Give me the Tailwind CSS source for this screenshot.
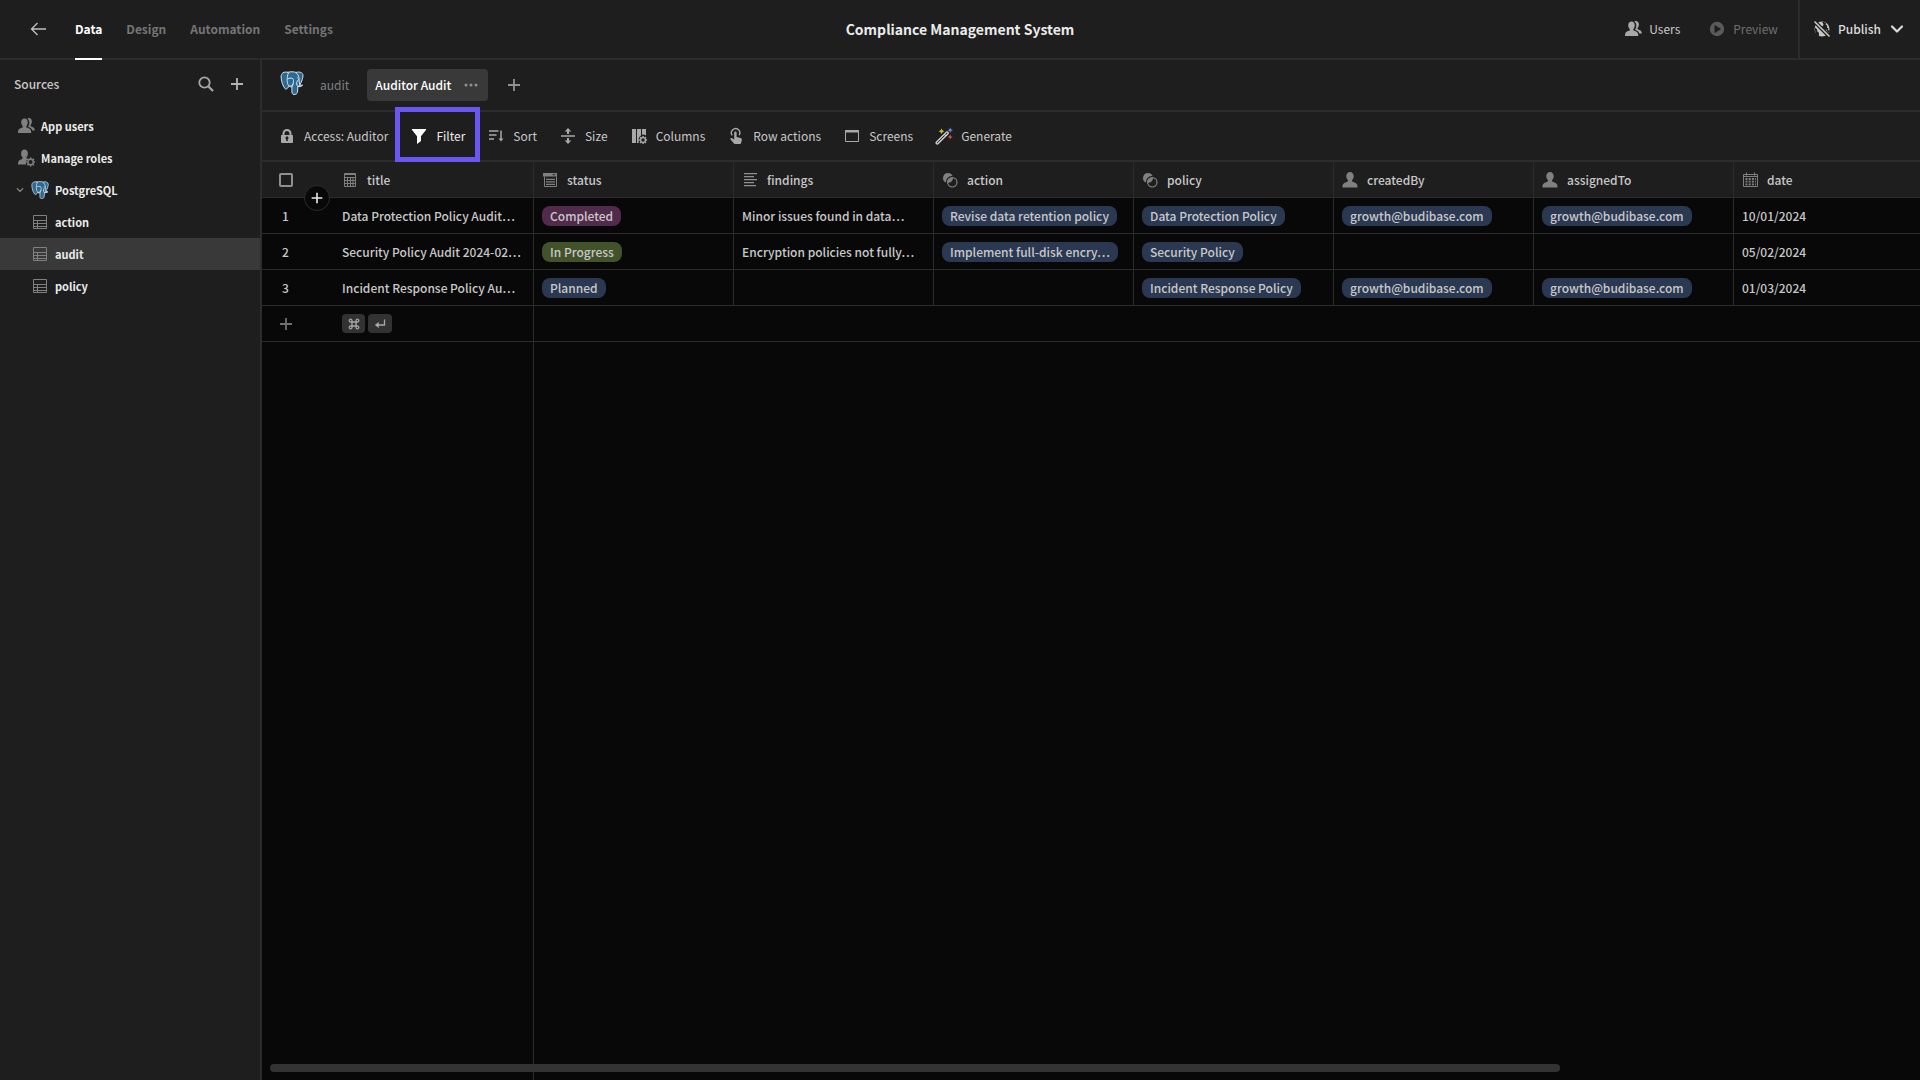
<!DOCTYPE html>
<html lang="en">
  <head>
    <meta charset="UTF-8" />
    <meta name="viewport" content="width=device-width, initial-scale=1.0" />
    <title>Compliance Management System</title>
    <script src="https://cdn.jsdelivr.net/npm/@tailwindcss/browser@4"></script>
  </head>
  <body
    class="flex h-screen flex-col overflow-hidden bg-[#1e1e1e] font-['Noto_Sans_CJK_SC','Open_Sans',sans-serif] text-[12px] leading-5 text-[#c8c8c8]"
  >
    <!-- icon set -->
    <svg class="hidden">
      <symbol id="postgres" viewBox="0 0 24 24">
        <g stroke="#d5dfe6" stroke-width="1" stroke-linejoin="round" stroke-linecap="round">
          <path fill="#2c6a94" d="M7.6 1.3C3.6.2 1 2.2 1.1 6c.1 3.600 1.700 9 3.700 11.400.9 1.100 2 .7 3-.5l1.300-1.600c.8.500 1.700.600 2.800.500v5c.1 2.600 1.600 3 3.300 2.600 1.800-.4 2.300-1.400 2.400-3.400l.3-4.400c1.600.2 3.600-.1 4.700-1.400-.9.1-2.300.1-2.800-.5 2-2.900 3.300-7.200 3.200-9.500C22.900 1.800 19.700.2 15.900 1.500 14.300.7 10.300.4 7.600 1.300Z" />
          <path fill="none" d="M8.800 1.600C7 3.500 7.300 7 7.200 9.200c-.1 2 .4 4.700 1.900 6.100M15.900 1.500c2.200 1.500 3.100 4 3.100 6.500 0 2.400.3 3.700.8 5.700M12.300 7.400c1.600-.6 1.300 3.800.8 5.600-.5 1.500-2.300 1.800-4 2.300M11.900 15.800c.3-1.300 1.200-1.700 1.200-2.800M17.900 15.600c-.5-.8-1.100-1.500-1.300-2.700M16.600 12.900c-.2-2.500 1.300-4 2.300-4.700M8 7.800c1.500-.9 3.200-.9 4.300-.4" />
          <path fill="#d5dfe6" stroke="none" d="M10 6.700h1.500l-.6.900ZM16.600 6.500h1.500l-.8.900ZM18.600 13.900c1.400.6 3 .5 4.100.4-.9 1.100-2.800 1.600-4.500 1.200Z" />
        </g>
      </symbol>
      <symbol id="users" viewBox="0 0 18 18">
        <path d="M7.500 1.500c2 0 3.300 1.500 3.300 3.800 0 1.500-.6 2.900-1.400 3.700-.3.900 0 1.400.8 1.700 2.100.7 4 1.500 4 4.200V16H1v-1.100c0-2.700 1.800-3.500 4-4.200.8-.3 1-.8.700-1.700-.9-.8-1.500-2.200-1.500-3.700 0-2.300 1.400-3.800 3.300-3.800Z" />
        <path d="M10.300 1.500c.5-.4 1-.5 1.600-.5 1.800 0 3 1.400 3 3.500 0 1.500-.5 2.700-1.300 3.500-.3.900 0 1.300.7 1.600 1.900.6 3.600 1.500 3.600 4h-2.600c-.4-2.100-1.800-3.100-4.300-3.900.9-1.200 1.300-2.800 1.300-4.300 0-1.700-.8-3.100-2-3.900Z" />
      </symbol>
      <symbol id="user" viewBox="0 0 18 18">
        <path d="M9 1c2.200 0 3.700 1.700 3.700 4.100 0 1.600-.6 3.100-1.500 4-.4 1.100 0 1.700.9 2 2.400.8 4.400 1.500 4.400 4.400v1H1.500v-1c0-2.900 2-3.600 4.400-4.400.9-.3 1.300-.9.900-2-.9-.9-1.500-2.400-1.500-4C5.300 2.700 6.800 1 9 1Z" />
      </symbol>
      <symbol id="roles" viewBox="0 0 18 18">
        <path d="M7.500.5c2 0 3.400 1.600 3.400 3.900 0 1.500-.5 2.800-1.300 3.600-.4 1 0 1.600.8 1.900l.5.2a5 5 0 0 0-1.800 5.400H1v-1.200c0-2.500 1.800-3.500 3.700-4.100.8-.3 1-.9.700-2C4.600 7.400 4.100 6 4.100 4.400 4.100 2.100 5.500.5 7.500.5Z" />
        <g fill="none" stroke="currentColor">
          <circle cx="13.600" cy="13" r="2.700" stroke-width="1.400" />
          <path stroke-width="1.600" d="M13.600 10V8.500M13.600 16v1.500M10.600 13H9.100M16.600 13h1.500M11.500 10.900l-1.100-1.100M15.700 15.100l1.100 1.100M15.700 10.900l1.100-1.100M11.500 15.100l-1.100 1.100" />
        </g>
      </symbol>
      <symbol id="sheet" viewBox="0 0 18 18">
        <path fill="none" stroke="currentColor" d="M2.500 2.500h13v13h-13ZM2.500 7.500h13M2.500 10.500h13M2.500 13.500h13M6.500 7.500v8" />
      </symbol>
      <symbol id="plus" viewBox="0 0 18 18">
        <path fill="none" stroke="currentColor" stroke-width="1.800" d="M9 3v12M3 9h12" />
      </symbol>
      <symbol id="chevron" viewBox="0 0 18 18">
        <path fill="none" stroke="currentColor" stroke-width="2.200" stroke-linecap="round" stroke-linejoin="round" d="m4 6.500 5 5 5-5" />
      </symbol>
      <symbol id="related" viewBox="0 0 18 18">
        <path d="M7 2a5 5 0 0 1 4.600 3.100 5.600 5.600 0 0 0-6.500 6.500A5 5 0 0 1 7 2Z" />
        <path d="M6.200 11.900a5 5 0 0 0 5.700-5.700 5.600 5.600 0 0 0-5.700 5.700Z" />
        <circle cx="11.300" cy="11.300" r="4.700" fill="none" stroke="currentColor" stroke-width="1.200" />
      </symbol>
    </svg>

    <!-- top bar -->
    <header class="grid h-[60px] shrink-0 grid-cols-[1fr_auto_1fr] border-b-2 border-[#2c2c2c]">
      <div class="flex">
        <a href="#" aria-label="Back" class="flex w-[75px] items-center pl-[30px]">
          <svg class="size-[18px]" viewBox="0 0 18 18" fill="none" stroke="#c0c0c0" stroke-width="1.300"><path d="M16 9H1.500M7.500 3l-6 6 6 6" /></svg>
        </a>
        <nav class="flex gap-6 font-bold text-[#757575]">
          <a href="#" class="-mb-[2px] flex items-center border-b-2 border-white text-white">Data</a>
          <a href="#" class="flex items-center">Design</a>
          <a href="#" class="flex items-center">Automation</a>
          <a href="#" class="flex items-center">Settings</a>
        </nav>
      </div>
      <h1 class="flex items-center text-[14px] font-bold text-[#ebebeb]">Compliance Management System</h1>
      <div class="flex justify-end">
        <button class="flex items-center gap-[7px]">
          <svg class="size-[18px] fill-current text-[#a8a8a8]"><use href="#users" /></svg>
          Users
        </button>
        <button class="ml-7 mr-5 flex items-center gap-[7px] text-[#6e6e6e]" disabled>
          <svg class="size-[18px]" viewBox="0 0 18 18"><circle cx="9" cy="9" r="7.200" fill="#5a5a5a" /><path fill="#1e1e1e" d="M6.500 4.800 13 9l-6.500 4.200Z" /></svg>
          Preview
        </button>
        <button class="flex items-center gap-[7px] border-l-2 border-[#2c2c2c] pr-[14px] pl-[13px] font-medium text-[#dcdcdc]">
          <svg class="size-[18px]" viewBox="0 0 18 18" fill="#c8c8c8">
            <circle cx="9" cy="9" r="7.500" />
            <path fill="#1e1e1e" d="M9.500 1.500c-.5 1.500.8 1.700 1 2.900.2 1.300-1.500 1.400-1.500 2.900l2.700 2.500c1.500-.2 2.600 0 2.300 1.500l2 1.200.5-1.500-1.500-1.200.4-1.500-1.500-.8.4-1.500-1.700-1.700.6-1.400ZM1.500 7l2.600 2.400.3 2 1.500 1.300.2 3.200L2.800 14.500Z" />
            <path stroke="#1e1e1e" stroke-width="4" d="m.5.500 17 17" />
            <path stroke="#c8c8c8" stroke-width="1.600" d="m1.500 1.500 15 15" />
          </svg>
          Publish
          <svg class="size-[18px]"><use href="#chevron" /></svg>
        </button>
      </div>
    </header>

    <div class="flex min-h-0 flex-1">
      <!-- sources -->
      <aside class="w-[262px] shrink-0 border-r-2 border-[#2c2c2c]">
        <div class="mb-[2px] flex h-12 items-center gap-[13px] px-[14px]">
          <h2 class="flex-1 font-medium">Sources</h2>
          <button aria-label="Search">
            <svg class="size-[18px]" viewBox="0 0 18 18" fill="none" stroke="#a8a8a8" stroke-width="1.800"><circle cx="7.500" cy="7.500" r="5.200" /><path stroke-width="2.200" d="m11.500 11.500 4.500 4.500" /></svg>
          </button>
          <button aria-label="Add source">
            <svg class="size-[18px] text-[#b4b4b4]"><use href="#plus" /></svg>
          </button>
        </div>
        <ul class="text-[11px] font-bold text-[#ebebeb]">
          <li>
            <a href="#" class="flex h-8 items-center gap-[6px] pl-[17px]"><svg class="size-[18px] fill-current text-[#808080]"><use href="#users" /></svg>App users</a>
          </li>
          <li>
            <a href="#" class="flex h-8 items-center gap-[6px] pl-[17px]"><svg class="size-[18px] fill-current text-[#808080]"><use href="#roles" /></svg>Manage roles</a>
          </li>
          <li>
            <a href="#" class="flex h-8 items-center gap-[6px] pl-[15px]">
              <svg class="size-[10px] text-[#909090]"><use href="#chevron" /></svg>
              <svg class="size-[18px]"><use href="#postgres" /></svg>PostgreSQL
            </a>
          </li>
          <li>
            <a href="#" class="flex h-8 items-center gap-[6px] pl-[31px]"><svg class="size-[18px] text-[#808080]"><use href="#sheet" /></svg>action</a>
          </li>
          <li>
            <a href="#" class="flex h-8 items-center gap-[6px] bg-[#393939] pl-[31px]"><svg class="size-[18px] text-[#808080]"><use href="#sheet" /></svg>audit</a>
          </li>
          <li>
            <a href="#" class="flex h-8 items-center gap-[6px] pl-[31px]"><svg class="size-[18px] text-[#808080]"><use href="#sheet" /></svg>policy</a>
          </li>
        </ul>
      </aside>

      <main class="flex min-w-0 flex-1 flex-col">
        <!-- views -->
        <div class="flex h-[52px] shrink-0 items-center border-b-2 border-[#2c2c2c] pl-[18px]">
          <svg class="mb-1 size-6"><use href="#postgres" /></svg>
          <a href="#" class="ml-4 text-[#808080]">audit</a>
          <div class="ml-[18px] flex h-8 items-center gap-[11px] rounded bg-[#393939] px-2">
            <a href="#" class="font-medium text-white">Auditor Audit</a>
            <button aria-label="View options">
              <svg class="size-[18px] fill-[#909090]" viewBox="0 0 18 18"><circle cx="4" cy="9" r="1.500" /><circle cx="9" cy="9" r="1.500" /><circle cx="14" cy="9" r="1.500" /></svg>
            </button>
          </div>
          <button aria-label="Create view" class="ml-[17px]">
            <svg class="size-[18px] text-[#909090]"><use href="#plus" /></svg>
          </button>
        </div>

        <!-- toolbar -->
        <div class="flex h-[50px] shrink-0 items-center gap-[6px] border-b-2 border-[#2c2c2c] px-2">
          <button class="flex h-8 items-center gap-2 px-2">
            <svg class="size-[18px] fill-[#a8a8a8]" viewBox="0 0 18 18"><path fill-rule="evenodd" d="M4.500 8V6.500a4.500 4.500 0 0 1 9 0V8h.7c.5 0 .8.300.8.800v6.400c0 .5-.3.800-.8.800H3.800c-.5 0-.8-.3-.8-.8V8.800c0-.5.300-.8.800-.8Zm2 0h5V6.500a2.500 2.500 0 0 0-5 0ZM8.200 12.200V14h1.600v-1.800a1.500 1.500 0 1 0-1.600 0Z" /></svg>
            Access: Auditor
          </button>
          <button class="relative flex h-8 items-center gap-2 px-2 text-[#ebebeb]">
            <svg class="size-[18px] fill-white" viewBox="0 0 18 18"><path d="M2.300 2h13.400c.4 0 .6.500.4.800L11 9.300V14l-4 2.900V9.300L1.900 2.800c-.2-.3 0-.8.4-.8Z" /></svg>
            Filter
            <span class="absolute -inset-x-[7px] -top-[13px] -bottom-[10px] border-5 border-[#6a56f0]"></span>
          </button>
          <button class="flex h-8 items-center gap-2 px-2">
            <svg class="size-[18px]" viewBox="0 0 18 18" fill="none" stroke="#a8a8a8" stroke-width="1.500"><path d="M2 4h9.500M2 8h7.500M2 12h5M14 3.500V13" /><path fill="#a8a8a8" stroke="none" d="M11.500 11.500h5L14 14.500Z" /></svg>
            Sort
          </button>
          <button class="flex h-8 items-center gap-2 px-2">
            <svg class="size-[18px] fill-[#a8a8a8]" viewBox="0 0 18 18"><path d="M2 8.200h14v1.600H2ZM9 1l3.300 3.500H10V7H8V4.500H5.700ZM9 17l3.300-3.500H10V11H8v2.500H5.700Z" /></svg>
            Size
          </button>
          <button class="flex h-8 items-center gap-2 px-2">
            <svg class="size-[18px] fill-[#a8a8a8]" viewBox="0 0 18 18">
              <path d="M2 2h4v14H2ZM7 2h4v6.500a5 5 0 0 0-2.300 5V16H7ZM12 2h4v6.500a5 5 0 0 0-4-.8Z" />
              <g fill="none" stroke="#a8a8a8"><circle cx="13" cy="13" r="2.400" stroke-width="1.300" /><path stroke-width="1.500" d="M13 10.500V8.900M13 15.500v1.600M10.500 13H8.900M15.500 13h1.600M11.200 11.200l-1.100-1.100M14.800 14.800l1.100 1.100M14.800 11.200l1.100-1.100M11.200 14.800l-1.100 1.100" /></g>
            </svg>
            Columns
          </button>
          <button class="flex h-8 items-center gap-2 px-2">
            <svg class="size-[18px] fill-[#a8a8a8]" viewBox="0 0 18 18"><path fill="none" stroke="#a8a8a8" stroke-width="1.400" d="M5.200 8.300a4.200 4.200 0 1 1 6.900-.2" /><path d="M7.200 5.700a1.200 1.200 0 0 1 2.400 0V10l4 1c.9.300 1.400 1 1.200 1.900l-.8 3.300c-.1.500-.5.800-1 .8H8c-.6 0-1-.3-1.300-.8l-3.300-4c-.5-.7.3-1.600 1.200-1.200l2.600 1.400Z" /></svg>
            Row actions
          </button>
          <button class="flex h-8 items-center gap-2 px-2">
            <svg class="size-[18px]" viewBox="0 0 18 18"><path fill="none" stroke="#a8a8a8" d="M2.500 3.500h13v11h-13Z" /><path fill="#a8a8a8" d="M2 3h14v2.500H2Z" /></svg>
            Screens
          </button>
          <button class="flex h-8 items-center gap-2 px-2">
            <svg class="size-[18px]" viewBox="0 0 18 18">
              <path fill="#1e1e1e" stroke="#d8d8d8" stroke-width="1.300" stroke-linejoin="round" d="M1.300 15.200 11.400 5.100c.9-.8 2.500.7 1.600 1.600L2.900 16.800c-.8.800-2.500-.8-1.600-1.600Z" />
              <path stroke="#d8d8d8" stroke-width="1.200" d="m9.300 7.200 1.600 1.600" />
              <path fill="#c9b53c" d="m6.500 1.500 1 1.800 1.800 1-1.800 1-1 1.800-1-1.800-1.800-1 1.800-1Z" />
              <path fill="#6d7fe0" d="m15.200.5.900 1.800 1.800.9-1.800.9-.9 1.800-.9-1.800-1.800-.9 1.800-.9Z" />
              <path fill="#d9503f" d="m15.200 7.500.8 1.700 1.700.8-1.700.8-.8 1.700-.8-1.700-1.700-.8 1.700-.8Z" />
            </svg>
            Generate
          </button>
        </div>

        <!-- grid -->
        <div class="relative min-h-0 flex-1 overflow-hidden bg-[#080808]">
          <table class="h-full w-full min-w-[1672px] table-fixed border-separate border-spacing-0 text-left font-medium [&_tr>*]:border-[#2c2c2c]">
            <colgroup>
              <col class="w-[72px]" />
              <col class="w-[200px]" />
              <col class="w-[200px]" />
              <col class="w-[200px]" />
              <col class="w-[200px]" />
              <col class="w-[200px]" />
              <col class="w-[200px]" />
              <col class="w-[200px]" />
              <col />
            </colgroup>
            <thead class="bg-[#1e1e1e] [&_th]:h-9 [&_th]:border-b [&_th]:p-0 [&_th]:font-medium">
              <tr>
                <th>
                  <input type="checkbox" aria-label="Select all rows" class="ml-[17px] block size-[14px] appearance-none rounded-xs border-2 border-[#909090]" />
                </th>
                <th class="border-r">
                  <div class="flex items-center gap-2 px-[7px]">
                    <svg class="size-[18px]" viewBox="0 0 18 18" fill="none" stroke="#808080"><path d="M3.500 2.500h11v13h-11ZM3.500 6.500h11M3.500 9.500h11M3.500 12.500h11M6.500 6.500v9M9.500 6.500v9M12 6.500v9M3.500 3.500h11" /></svg>
                    title
                  </div>
                </th>
                <th class="border-r">
                  <div class="flex items-center gap-2 px-[7px]">
                    <svg class="size-[18px]" viewBox="0 0 18 18" fill="none" stroke="#808080"><path fill="#808080" stroke="none" d="M2 2h14v3.500H2Z" /><path d="M3.500 5.500v10h12v-10" /><path stroke-width="1.300" d="M5 8.300h9M5 10.800h9M5 13.300h9" /><path stroke="#1e1e1e" d="m11.500 3 1.300 1.300L14.100 3" /></svg>
                    status
                  </div>
                </th>
                <th class="border-r">
                  <div class="flex items-center gap-2 px-[7px]">
                    <svg class="size-[18px]" viewBox="0 0 18 18" fill="none" stroke="#909090" stroke-width="1.300"><path d="M3 2.700h13M3 5.700h10M3 8.700h13M3 11.700h10M3 14.700h12" /></svg>
                    findings
                  </div>
                </th>
                <th class="border-r">
                  <div class="flex items-center gap-2 px-[7px]"><svg class="size-[18px] fill-current text-[#808080]"><use href="#related" /></svg>action</div>
                </th>
                <th class="border-r">
                  <div class="flex items-center gap-2 px-[7px]"><svg class="size-[18px] fill-current text-[#808080]"><use href="#related" /></svg>policy</div>
                </th>
                <th class="border-r">
                  <div class="flex items-center gap-2 px-[7px]"><svg class="size-[18px] fill-[#808080]"><use href="#user" /></svg>createdBy</div>
                </th>
                <th class="border-r">
                  <div class="flex items-center gap-2 px-[7px]"><svg class="size-[18px] fill-[#808080]"><use href="#user" /></svg>assignedTo</div>
                </th>
                <th>
                  <div class="flex items-center gap-2 px-[7px]">
                    <svg class="size-[18px]" viewBox="0 0 18 18" fill="none" stroke="#808080"><path d="M2.500 3.500h14v12h-14ZM2.500 5.500h14M5.500 1.500v3M13.500 1.500v3" /><path stroke-width="1.800" stroke-dasharray="2 1.200" d="M4.500 8h10.500M4.500 10.700h10.500M4.500 13.300h10.500" /></svg>
                    date
                  </div>
                </th>
              </tr>
            </thead>
            <tbody class="[&_td]:h-9 [&_td]:px-2 [&_td]:py-0 [&_td]:whitespace-nowrap [&_tr:not(:last-child)>td]:border-b">
              <tr>
                <td><span class="pl-3">1</span></td>
                <td class="border-r">Data Protection Policy Audit…</td>
                <td class="border-r"><span class="block w-fit max-w-full truncate rounded-lg bg-[#522a4b] px-2">Completed</span></td>
                <td class="border-r">Minor issues found in data…</td>
                <td class="border-r"><span class="block w-fit max-w-full truncate rounded-lg bg-[#2b3852] px-2">Revise data retention policy</span></td>
                <td class="border-r"><span class="block w-fit max-w-full truncate rounded-lg bg-[#2b3852] px-2">Data Protection Policy</span></td>
                <td class="border-r"><span class="block w-fit max-w-full truncate rounded-lg bg-[#2b3852] px-2">growth@budibase.com</span></td>
                <td class="border-r"><span class="block w-fit max-w-full truncate rounded-lg bg-[#2b3852] px-2">growth@budibase.com</span></td>
                <td>10/01/2024</td>
              </tr>
              <tr>
                <td><span class="pl-3">2</span></td>
                <td class="border-r">Security Policy Audit 2024-02…</td>
                <td class="border-r"><span class="block w-fit max-w-full truncate rounded-lg bg-[#42522b] px-2">In Progress</span></td>
                <td class="border-r">Encryption policies not fully…</td>
                <td class="border-r"><span class="block w-fit max-w-full truncate rounded-lg bg-[#2b3852] px-2">Implement full-disk encry…</span></td>
                <td class="border-r"><span class="block w-fit max-w-full truncate rounded-lg bg-[#2b3852] px-2">Security Policy</span></td>
                <td class="border-r"></td>
                <td class="border-r"></td>
                <td>05/02/2024</td>
              </tr>
              <tr>
                <td><span class="pl-3">3</span></td>
                <td class="border-r">Incident Response Policy Au…</td>
                <td class="border-r"><span class="block w-fit max-w-full truncate rounded-lg bg-[#2b3852] px-2">Planned</span></td>
                <td class="border-r"></td>
                <td class="border-r"></td>
                <td class="border-r"><span class="block w-fit max-w-full truncate rounded-lg bg-[#2b3852] px-2">Incident Response Policy</span></td>
                <td class="border-r"><span class="block w-fit max-w-full truncate rounded-lg bg-[#2b3852] px-2">growth@budibase.com</span></td>
                <td class="border-r"><span class="block w-fit max-w-full truncate rounded-lg bg-[#2b3852] px-2">growth@budibase.com</span></td>
                <td>01/03/2024</td>
              </tr>
              <tr>
                <td>
                  <button aria-label="Add row" class="ml-[7px] block"><svg class="size-[18px] text-[#707070]"><use href="#plus" /></svg></button>
                </td>
                <td class="border-r">
                  <div class="flex gap-[3px] text-[#a8a8a8]">
                    <kbd class="flex h-[19px] w-[23px] items-center justify-center rounded bg-[#323232]">
                      <svg class="size-3" viewBox="0 0 12 12" fill="none" stroke="currentColor" stroke-width="1.300"><path d="M4 4h4v4H4ZM4 4H2.700A1.400 1.400 0 1 1 4 2.700ZM8 4V2.700A1.400 1.400 0 1 1 9.300 4ZM8 8h1.300A1.400 1.400 0 1 1 8 9.300ZM4 8v1.300A1.400 1.400 0 1 1 2.700 8Z" /></svg>
                    </kbd>
                    <kbd class="flex h-[19px] w-6 items-center justify-center rounded bg-[#323232]">
                      <svg class="size-3" viewBox="0 0 12 12" fill="none" stroke="currentColor" stroke-width="1.300"><path d="M10.500 1.500V7H2" /><path fill="currentColor" stroke="none" d="M4.800 4v6L.8 7Z" /></svg>
                    </kbd>
                  </div>
                </td>
                <td colspan="7"></td>
              </tr>
              <!-- empty space under the rows -->
              <tr class="h-full">
                <td></td>
                <td class="border-r"></td>
                <td colspan="7"></td>
              </tr>
            </tbody>
          </table>
          <button aria-label="Insert row" class="absolute top-[23px] left-[42px] flex size-[26px] items-center justify-center rounded-full border border-[#2c2c2c] bg-[#080808]">
            <svg class="size-4 text-[#ebebeb]"><use href="#plus" /></svg>
          </button>
          <div class="absolute bottom-2 left-2 h-2 w-[77.8%] rounded-full bg-[#333333]"></div>
        </div>
      </main>
    </div>
  </body>
</html>
